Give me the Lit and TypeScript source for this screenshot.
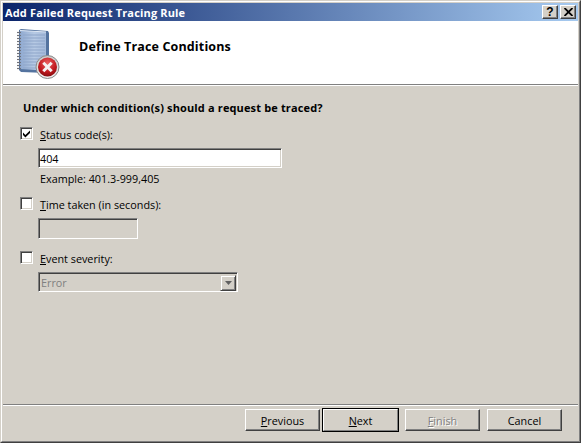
import { LitElement, html, css, svg } from "lit";
import { customElement } from "lit/decorators.js";

const rings = [6, 9, 12, 15, 18, 21, 24, 27, 30, 33, 36, 39, 42];

const icon = svg`<svg class="logo" width="48" height="52" viewBox="0 0 48 52">
  <defs>
    <linearGradient id="pg" x1="0" y1="0" x2="1" y2="0"><stop offset="0" stop-color="#8fa9d0"/><stop offset="0.55" stop-color="#b7cae4"/><stop offset="1" stop-color="#a3b9da"/></linearGradient>
    <radialGradient id="rg" cx="0.5" cy="0.3" r="0.75"><stop offset="0" stop-color="#ea6060"/><stop offset="0.6" stop-color="#c21a1f"/><stop offset="1" stop-color="#7c0a0e"/></radialGradient>
    <linearGradient id="rim" x1="0" y1="0" x2="0" y2="1"><stop offset="0" stop-color="#c8c8c8"/><stop offset="1" stop-color="#f2f2f2"/></linearGradient>
  </defs>
  <path d="M5 3 L7 2 L34 4 L35 6 L35 44 L33 46 L7 45 L5 43 Z" fill="#54739f"/>
  <path d="M6 3.5 L32 5 L32 43.5 L6 42 Z" fill="url(#pg)"/>
  <path d="M6 3.5 L32 5" stroke="#dfe8f4" stroke-width="1"/>
  <path d="M9 8H31M9 11H31M9 14H31M9 17H31M9 20H31M9 23H31M9 26H31M9 29H31M9 32H31M9 35H31M9 38H31M9 41H31" stroke="#8ea5c9" stroke-width="1"/>
  ${rings.map((y) => svg`<path d="M3 ${y - 0.5} H7" stroke="#6d7078" stroke-width="1.2"/>`)}
  <circle cx="33.5" cy="40" r="11.5" fill="url(#rim)" stroke="#8a8a8a"/>
  <circle cx="33.5" cy="40" r="9.5" fill="url(#rg)"/>
  <path d="M29.3 35.8 L37.7 44.2 M37.7 35.8 L29.3 44.2" stroke="#f6f2f2" stroke-width="3"/>
</svg>`;

@customElement("app-root")
export class AppRoot extends LitElement {
  static styles = css`
    :host { display: block; width: 581px; height: 443px; font-family: "Open Sans", "Liberation Sans", sans-serif; font-size: 10.8px; color: #000; }
    * { box-sizing: border-box; }
    .win { width: 581px; height: 443px; background: #d4d0c8; display: flex; flex-direction: column;
      border: 1px solid; border-color: #d4d0c8 #404040 #404040 #d4d0c8; }
    .inner { flex: 1; display: flex; flex-direction: column; border: 1px solid; border-color: #fff #808080 #808080 #fff; padding: 1px; min-height: 0; }
    .title { height: 18px; background: linear-gradient(90deg, #0a246a, #a6caf0); display: flex; align-items: center; padding: 0 2px; flex: none; }
    .title span { color: #fff; font-weight: 700; font-size: 11px; letter-spacing: 0.16px; flex: 1; white-space: nowrap; }
    .cap { width: 16px; height: 14px; margin-left: 2px; background: #d4d0c8; border: 1px solid; border-color: #fff #404040 #404040 #fff; box-shadow: inset -1px -1px 0 #808080; display: flex; align-items: center; justify-content: center; font: 700 12px "Liberation Sans", sans-serif; line-height: 1; }
    .cap svg { display: block; }
    .head { height: 64px; background: #fff; flex: none; display: flex; align-items: flex-start; border-bottom: 1px solid #808080; padding-left: 11px; }
    .logo { margin-top: 6px; flex: none; }
    .head h1 { margin: 17px 0 0 17px; font-size: 12.5px; line-height: 17px; letter-spacing: 0.14px; font-weight: 700; }
    .body { flex: 1; padding: 15px 0 0 17px; box-shadow: inset 0 1px 0 #fff; }
    .q { font-weight: 700; font-size: 11px; letter-spacing: 0.14px; margin: 0 0 12px 3px; line-height: 15px; }
    .row { display: flex; align-items: flex-start; gap: 7px; height: 15px; line-height: 15px; }
    .cb { width: 13px; height: 13px; background: #fff; border: 1px solid; border-color: #808080 #fff #fff #808080; box-shadow: inset 1px 1px 0 #404040, inset -1px -1px 0 #d4d0c8; display: flex; align-items: center; justify-content: center; flex: none; }
    .cb svg { display: block; }
    u { text-decoration: underline; }
    .field { margin: 6px 0 0 18px; width: 244px; height: 20px; background: #fff; border: 1px solid; border-color: #808080 #fff #fff #808080; box-shadow: inset 1px 1px 0 #404040, inset -1px -1px 0 #d4d0c8; padding: 3px 1px; line-height: 13px; }
    .field.small { width: 100px; height: 21px; background: #d4d0c8; }
    .ex { margin: 3px 0 0 20px; line-height: 15px; }
    .t2 { margin-top: 11px; }
    .t3 { margin-top: 12px; }
    .combo { margin: 6px 0 0 18px; width: 200px; height: 20px; background: #d4d0c8; border: 1px solid; border-color: #808080 #fff #fff #808080; box-shadow: inset 1px 1px 0 #404040, inset -1px -1px 0 #d4d0c8; display: flex; justify-content: space-between; padding: 2px 1px 1px 2px; color: #808080; line-height: 15px; }
    .drop { width: 16px; height: 16px; border: 1px solid; border-color: #d4d0c8 #404040 #404040 #d4d0c8; box-shadow: inset 1px 1px 0 #fff, inset -1px -1px 0 #808080; display: flex; align-items: center; justify-content: center; }
    .drop svg { display: block; }
    .foot { height: 36px; flex: none; border-top: 1px solid #808080; box-shadow: inset 0 1px 0 #fff; display: flex; justify-content: flex-end; padding: 3px 16px 0 0; }
    .btn { width: 75px; height: 22px; margin-top: 1px; background: #d4d0c8; border: 1px solid; border-color: #fff #404040 #404040 #fff; box-shadow: inset -1px -1px 0 #808080; display: flex; align-items: center; justify-content: center; }
    .btn.def { outline: 1px solid #000; border-color: #fff #808080 #808080 #fff; box-shadow: none; margin-left: 3px; }
    .btn.dis { color: #808080; text-shadow: 1px 1px 0 #fff; }
    .gap { margin-left: 7px; }
  `;

  render() {
    const check = svg`<svg width="9" height="9" viewBox="0 0 9 9"><path d="M1 3.6 L3.4 6 L8 1.4 V4 L3.4 8.4 L1 6 Z" fill="#000"/></svg>`;
    return html`<div class="win"><div class="inner">
      <div class="title"><span>Add Failed Request Tracing Rule</span>
        <div class="cap">?</div>
        <div class="cap"><svg width="9" height="8" viewBox="0 0 9 8"><path d="M0.5 0 L8.5 8 M8.5 0 L0.5 8" stroke="#000" stroke-width="1.8"/></svg></div>
      </div>
      <div class="head">${icon}<h1>Define Trace Conditions</h1></div>
      <div class="body">
        <div class="q">Under which condition(s) should a request be traced?</div>
        <div class="row"><div class="cb">${check}</div><label><u>S</u>tatus code(s):</label></div>
        <div class="field">404</div>
        <div class="ex">Example: 401.3-999,405</div>
        <div class="row t2"><div class="cb"></div><label><u>T</u>ime taken (in seconds):</label></div>
        <div class="field small"></div>
        <div class="row t3"><div class="cb"></div><label><u>E</u>vent severity:</label></div>
        <div class="combo"><span>Error</span><div class="drop"><svg width="7" height="4" viewBox="0 0 7 4"><path d="M0 0H7L3.5 4Z" fill="#606060"/></svg></div></div>
      </div>
      <div class="foot">
        <div class="btn"><span><u>P</u>revious</span></div>
        <div class="btn def"><span><u>N</u>ext</span></div>
        <div class="btn dis gap"><span><u>F</u>inish</span></div>
        <div class="btn gap"><span>Cancel</span></div>
      </div>
    </div></div>`;
  }
}
